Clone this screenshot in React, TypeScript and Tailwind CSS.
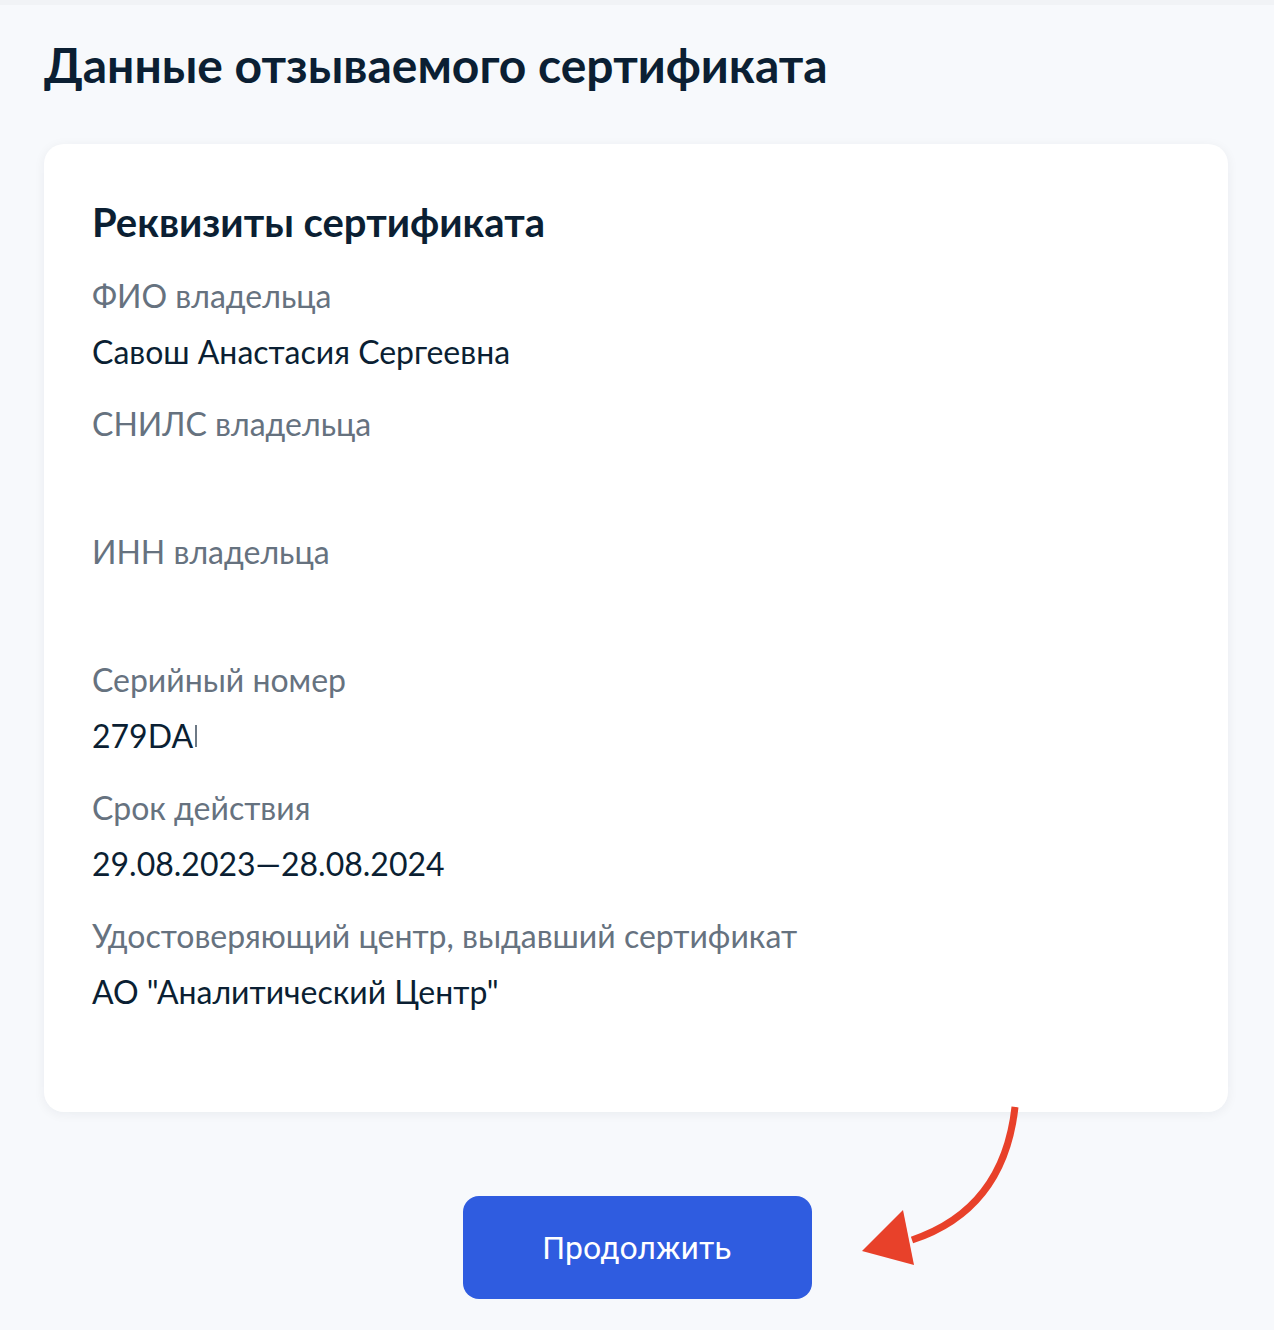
export default function App() {
  const rows: { label: string; value?: string; clip?: boolean }[] = [
    { label: "ФИО владельца", value: "Савош Анастасия Сергеевна" },
    { label: "СНИЛС владельца" },
    { label: "ИНН владельца" },
    { label: "Серийный номер", value: "279DA", clip: true },
    { label: "Срок действия", value: "29.08.2023—28.08.2024" },
    { label: "Удостоверяющий центр, выдавший сертификат", value: 'АО "Аналитический Центр"' },
  ];

  return (
    <div
      className="relative min-h-[1330px] w-[1274px] bg-[#f7f9fc] border-t-[5px] border-[#f1f3f6]"
      style={{ fontFamily: "Lato, 'Noto Sans', sans-serif" }}
    >
      <div className="px-[44px] pt-[28px]">
        <h1 className="text-[48px] leading-[64px] font-bold text-[#0b1f33]">
          Данные отзываемого сертификата
        </h1>

        {/* card */}
        <div className="mt-[47px] w-[1184px] h-[968px] bg-white rounded-[20px] shadow-[0_2px_12px_rgba(11,31,51,0.06)] px-[48px] pt-[52px]">
          <h2 className="text-[40px] leading-[52px] font-bold text-[#0b1f33]">
            Реквизиты сертификата
          </h2>
          <div className="mt-[28px] flex flex-col gap-[32px]">
            {rows.map((r) => (
              <div key={r.label} className="flex flex-col gap-[16px]">
                <div className="text-[32px] leading-[40px] text-[#66727f]">{r.label}</div>
                <div className="text-[32px] leading-[40px] text-[#0b1f33] h-[40px] flex items-center">
                  {r.value}
                  {r.clip && <span className="ml-[2px] w-[2px] h-[22px] bg-[#0b1f33]/60" />}
                </div>
              </div>
            ))}
          </div>
        </div>

        <div className="flex justify-center mt-[84px]">
          <button
            className="w-[349px] h-[103px] rounded-[16px] bg-[#2f5ce0] text-white text-[32px]"
            style={{ fontFamily: "Roboto, 'Noto Sans', sans-serif" }}
          >
            Продолжить
          </button>
        </div>
      </div>

      {/* annotation arrow */}
      <svg
        className="absolute left-[850px] top-[1095px]"
        width="180"
        height="170"
        viewBox="0 0 180 170"
        fill="none"
      >
        <path
          d="M165 7 C158 70 128 118 62 140"
          stroke="#e8412a"
          strokeWidth="7"
          strokeLinecap="butt"
        />
        <path d="M12 151 L53 110 L64 165 Z" fill="#e8412a" />
      </svg>
    </div>
  );
}
